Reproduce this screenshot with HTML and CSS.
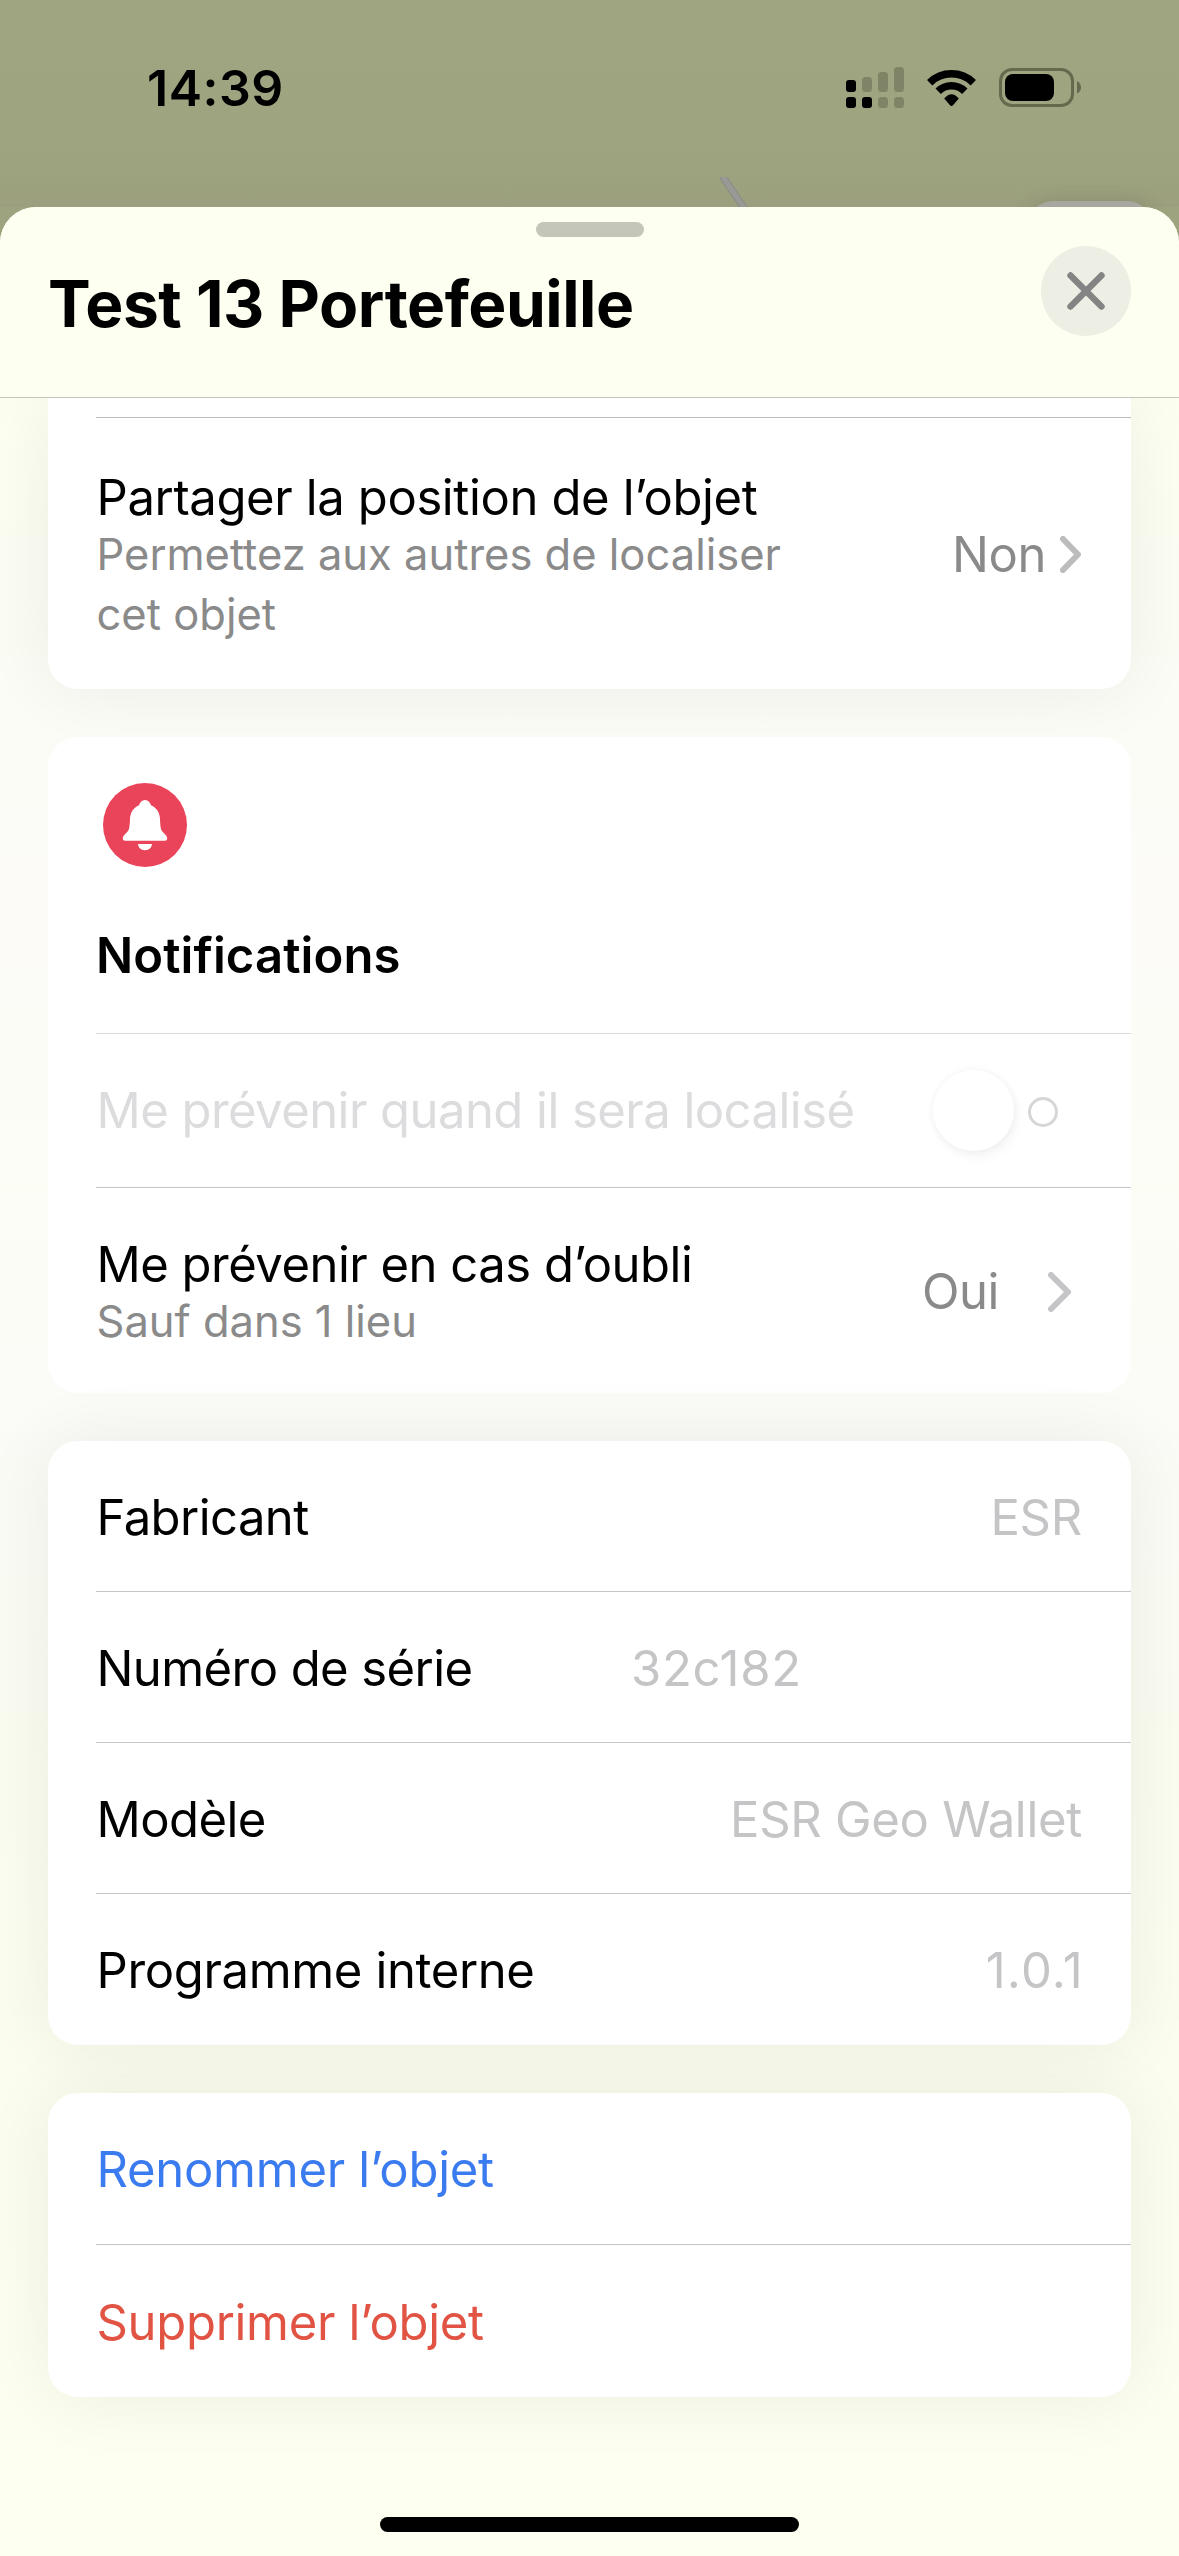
FILE: index.html
```
<!DOCTYPE html>
<html lang="fr">
<head>
<meta charset="utf-8">
<title>Test 13 Portefeuille</title>
<link rel="stylesheet" href="styles.css">
</head>
<body>
<div class="screen">
  <header class="status">
    <span class="clock">14:39</span>
    <div class="indicators">
      <svg class="signal" width="58" height="42" viewBox="0 0 58 42">
        <rect x="0" y="13" width="10" height="12" rx="3"/>
        <rect x="0" y="30" width="10" height="11" rx="3"/>
        <rect x="16" y="30" width="10" height="11" rx="3"/>
        <g fill="#7f8467">
          <rect x="16" y="10" width="10" height="15" rx="3.5"/>
          <rect x="32" y="5" width="10" height="20" rx="3.5"/>
          <rect x="48" y="0" width="10" height="25" rx="3.5"/>
          <rect x="32" y="30" width="10" height="11" rx="3.5"/>
          <rect x="48" y="30" width="10" height="11" rx="3.5"/>
        </g>
      </svg>
      <svg class="wifi" width="52" height="38" viewBox="0 0 52 38">
        <g fill="none" stroke="#000" stroke-width="7.6">
          <path d="M3.7 13.7A31.2 31.2 0 0 1 47.3 13.7"/>
          <path d="M12.2 22.2A18.8 18.8 0 0 1 38.8 22.2"/>
        </g>
        <path d="M18.2 29.6Q25.500 21 32.800 29.600L27 36.200Q25.500 37.600 24 36.200Z"/>
      </svg>
      <svg class="battery" width="82" height="39" viewBox="0 0 82 39">
        <rect x="1.500" y="1.500" width="72" height="36" rx="11.500" fill="none" stroke="#656a4f" stroke-width="3"/>
        <rect x="6" y="6" width="49" height="27" rx="8"/>
        <path d="M78 13Q82 15.500 82 19.500T78 25.500Z" fill="#656a4f"/>
      </svg>
    </div>
    <svg class="map-road" width="40" height="34" viewBox="0 0 40 34">
      <path d="M1 -3L26 34" stroke="#8d8e87" stroke-width="7.500"/>
      <path d="M1 -3L26 34" stroke="#999995" stroke-width="5"/>
    </svg>
    <div class="map-button"></div>
  </header>

  <main class="sheet">
    <div class="sheet-head">
      <div class="grabber"></div>
      <div class="title-row">
        <h1 class="title">Test 13 Portefeuille</h1>
        <button class="close" aria-label="Fermer">
          <svg width="38" height="38" viewBox="0 0 38 38"><path d="M3.500 3.500L34.500 34.500M34.500 3.500L3.500 34.500" stroke="#848484" stroke-width="6.400" stroke-linecap="round"/></svg>
        </button>
      </div>
    </div>

    <div class="content">
      <section class="card card-share">
        <div class="row row-cut"></div>
        <div class="row row-share">
          <div class="texts">
            <div class="label">Partager la position de l’objet</div>
            <div class="sub">Permettez aux autres de localiser<br>cet objet</div>
          </div>
          <div class="value">Non</div>
          <svg class="chevron" width="21" height="37" viewBox="0 0 21 37"><path d="M3 3L18 18.500L3 34" fill="none" stroke="#bcbcbc" stroke-width="6" stroke-linecap="round" stroke-linejoin="round"/></svg>
        </div>
      </section>

      <section class="card card-notify">
        <div class="row row-heading">
          <svg class="bell" width="84" height="84" viewBox="0 0 84 84">
            <circle cx="42" cy="42" r="42" fill="#ea445a"/>
            <path fill="#fff" d="M42 17C38.800 17 37 19.200 36 22.300C30.500 24.600 27.300 29.500 27 36C26.700 43 26.400 45.800 25 48C23.500 50.300 19.800 52.300 19.800 55.600C19.800 57 20.800 57.800 22.200 57.800H61.800C63.200 57.800 64.200 57 64.200 55.600C64.200 52.300 60.500 50.300 59 48C57.600 45.800 57.300 43 57 36C56.700 29.500 53.500 24.600 48 22.300C47 19.200 45.200 17 42 17ZM35 61H49C48.700 64.800 46 67.200 42 67.200S35.300 64.800 35 61Z"/>
          </svg>
          <h2 class="heading">Notifications</h2>
        </div>
        <div class="row row-toggle">
          <div class="label muted">Me prévenir quand il sera localisé</div>
          <div class="toggle"><span class="knob"></span><span class="off-mark"></span></div>
        </div>
        <div class="row row-forgot">
          <div class="texts">
            <div class="label narrow">Me prévenir en cas d’oubli</div>
            <div class="sub">Sauf dans 1 lieu</div>
          </div>
          <div class="value">Oui</div>
          <svg class="chevron" width="23" height="40" viewBox="0 0 23 40"><path d="M3 3L20 20L3 37" fill="none" stroke="#c5c5c7" stroke-width="6" stroke-linecap="round" stroke-linejoin="round"/></svg>
        </div>
      </section>

      <section class="card">
        <div class="row"><div class="label tight">Fabricant</div><div class="detail">ESR</div></div>
        <div class="row"><div class="label tight">Numéro de série</div><div class="detail serial">32c182</div></div>
        <div class="row"><div class="label tight">Modèle</div><div class="detail">ESR Geo Wallet</div></div>
        <div class="row"><div class="label loose">Programme interne</div><div class="detail version">1.0.1</div></div>
      </section>

      <section class="card card-actions">
        <div class="row"><div class="label rename">Renommer l’objet</div></div>
        <div class="row"><div class="label remove">Supprimer l’objet</div></div>
      </section>
    </div>
    <div class="home-indicator"></div>
  </main>
</div>
</body>
</html>
```
FILE: styles.css
```
* { box-sizing: border-box; }

body {
  margin: 0;
  font-family: Inter, "Liberation Sans", sans-serif;
  color: #000;
}

.screen {
  width: 1179px;
  height: 2556px;
  display: flex;
  flex-direction: column;
  overflow: hidden;
  background: #9ea37f;
}

/* Status bar over the dimmed map */
.status {
  position: relative;
  flex: none;
  height: 207px;
  padding: 58px 98px 0 147px;
  display: flex;
  justify-content: space-between;
  align-items: flex-start;
  background: linear-gradient(#9fa580, #9ea480 70%, #9b9f7d);
}
.clock { font-size: 50px; font-weight: 600; line-height: 60px; letter-spacing: .5px; }
.indicators { display: flex; padding-top: 9px; }
.wifi { margin: 2px 0 0 22px; }
.battery { margin: 1px 0 0 21px; }
.map-road { position: absolute; left: 720px; top: 177px; }
.map-button {
  position: absolute;
  left: 1027px;
  top: 201px;
  width: 126px;
  height: 60px;
  border-radius: 26px;
  background: #a7a79f;
  box-shadow: 0 0 18px rgba(70, 70, 50, .2);
}

.sheet {
  position: relative;
  flex: 1;
  min-height: 0;
  display: flex;
  flex-direction: column;
  align-items: center;
  border-radius: 36px 36px 0 0;
  overflow: hidden;
  background: linear-gradient(#fdfff0 0, #fcfff0 190px, #fbfcf5 480px, #fcfbf8 700px, #fcfdf5 980px, #fbfbf7 1200px, #fafcf1 1500px, #fbfeee 1900px, #fdfff0 2349px);
}
.sheet-head {
  flex: none;
  width: 100%;
  height: 191px;
  padding: 15px 48px 0;
  border-bottom: 1px solid #c3c5ba;
  background: #fdfff0;
}
.grabber {
  width: 108px;
  height: 15px;
  margin: 0 auto;
  border-radius: 8px;
  background: #c4c6b9;
}
.title-row { display: flex; justify-content: space-between; align-items: flex-start; }
.title {
  margin: 27px 0 0;
  font-size: 64px;
  font-weight: 700;
  line-height: 80px;
  letter-spacing: -.47px;
}
.close {
  display: flex;
  align-items: center;
  justify-content: center;
  width: 90px;
  height: 90px;
  margin-top: 9px;
  padding: 0;
  border: 0;
  border-radius: 50%;
  background: #edefe4;
}

.content {
  flex: none;
  width: 100%;
  display: flex;
  flex-direction: column;
  gap: 48px;
  height: 2119px;
  padding: 0 48px;
  overflow: hidden;
}
.card {
  flex: none;
  border-radius: 30px;
  background: #fff;
  box-shadow: 0 0 72px rgba(0, 0, 0, .065);
}
.card-share { border-radius: 0 0 30px 30px; }
.card-notify { box-shadow: none; }

.row {
  display: flex;
  align-items: center;
  height: 151px;
  margin-left: 48px;
  padding: 3px 49px 0 0;
  border-bottom: 1px solid #c5c5c7;
}
.row:last-child { border-bottom: 0; }
.row > .label, .texts { margin-right: auto; }
.texts { align-self: flex-start; }
.label, .sub { padding-left: .5px; white-space: nowrap; }
.label { font-size: 49px; line-height: 56px; letter-spacing: -.38px; }
.sub { font-size: 43.5px; line-height: 60px; color: #8a8a8a; }
.value { font-size: 49px; line-height: 60px; letter-spacing: -.4px; color: #8a8a8b; }

.row-cut { height: 20px; border-color: #bcbcbc; }
.row-share { height: 271px; padding: 2px 50px 0 0; }
.row-share .texts { padding-top: 50px; }
.texts .sub { margin-top: -2px; }
.row-share .chevron { margin-left: 14px; }

.row-heading {
  flex-direction: column;
  align-items: flex-start;
  height: 297px;
  padding: 46px 0 0;
  border-color: #dadadc;
}
.bell { margin-left: 7px; }
.heading { margin: 59px 0 0; font-size: 49px; font-weight: 600; line-height: 60px; letter-spacing: .09px; }
.row-toggle { height: 154px; padding: 0 73px 0 0; }
.row > .muted { color: #dcdcde; letter-spacing: -.54px; }
.toggle { display: flex; align-items: center; gap: 14px; }
.knob {
  width: 81px;
  height: 81px;
  border-radius: 50%;
  background: #fff;
  box-shadow: 0 0 6px 2px rgba(0, 0, 0, .03), 3px 6px 12px rgba(0, 0, 0, .04);
}
.off-mark { width: 30px; height: 30px; margin-top: 3px; border: 3px solid #d6d6d6; border-radius: 50%; }
.row-forgot { height: 205px; padding: 2px 60px 0 0; }
.row-forgot .texts { padding-top: 47px; }
.row-forgot .chevron { margin-left: 49px; }

.narrow { letter-spacing: -.5px; }
.tight { letter-spacing: -.57px; }
.loose { letter-spacing: -.36px; }
.detail { font-size: 49px; line-height: 60px; letter-spacing: -.3px; color: #c5c5c7; }
.serial { margin-right: 280px; letter-spacing: .75px; }
.version { letter-spacing: 1.2px; margin-right: -2px; }
.card-actions .row { height: 152px; }
.rename { color: #3b7bf0; letter-spacing: -.28px; }
.remove { color: #e15343; letter-spacing: -.32px; }

.home-indicator {
  flex: none;
  width: 419px;
  height: 15px;
  border-radius: 8px;
  background: #000;
}
```
